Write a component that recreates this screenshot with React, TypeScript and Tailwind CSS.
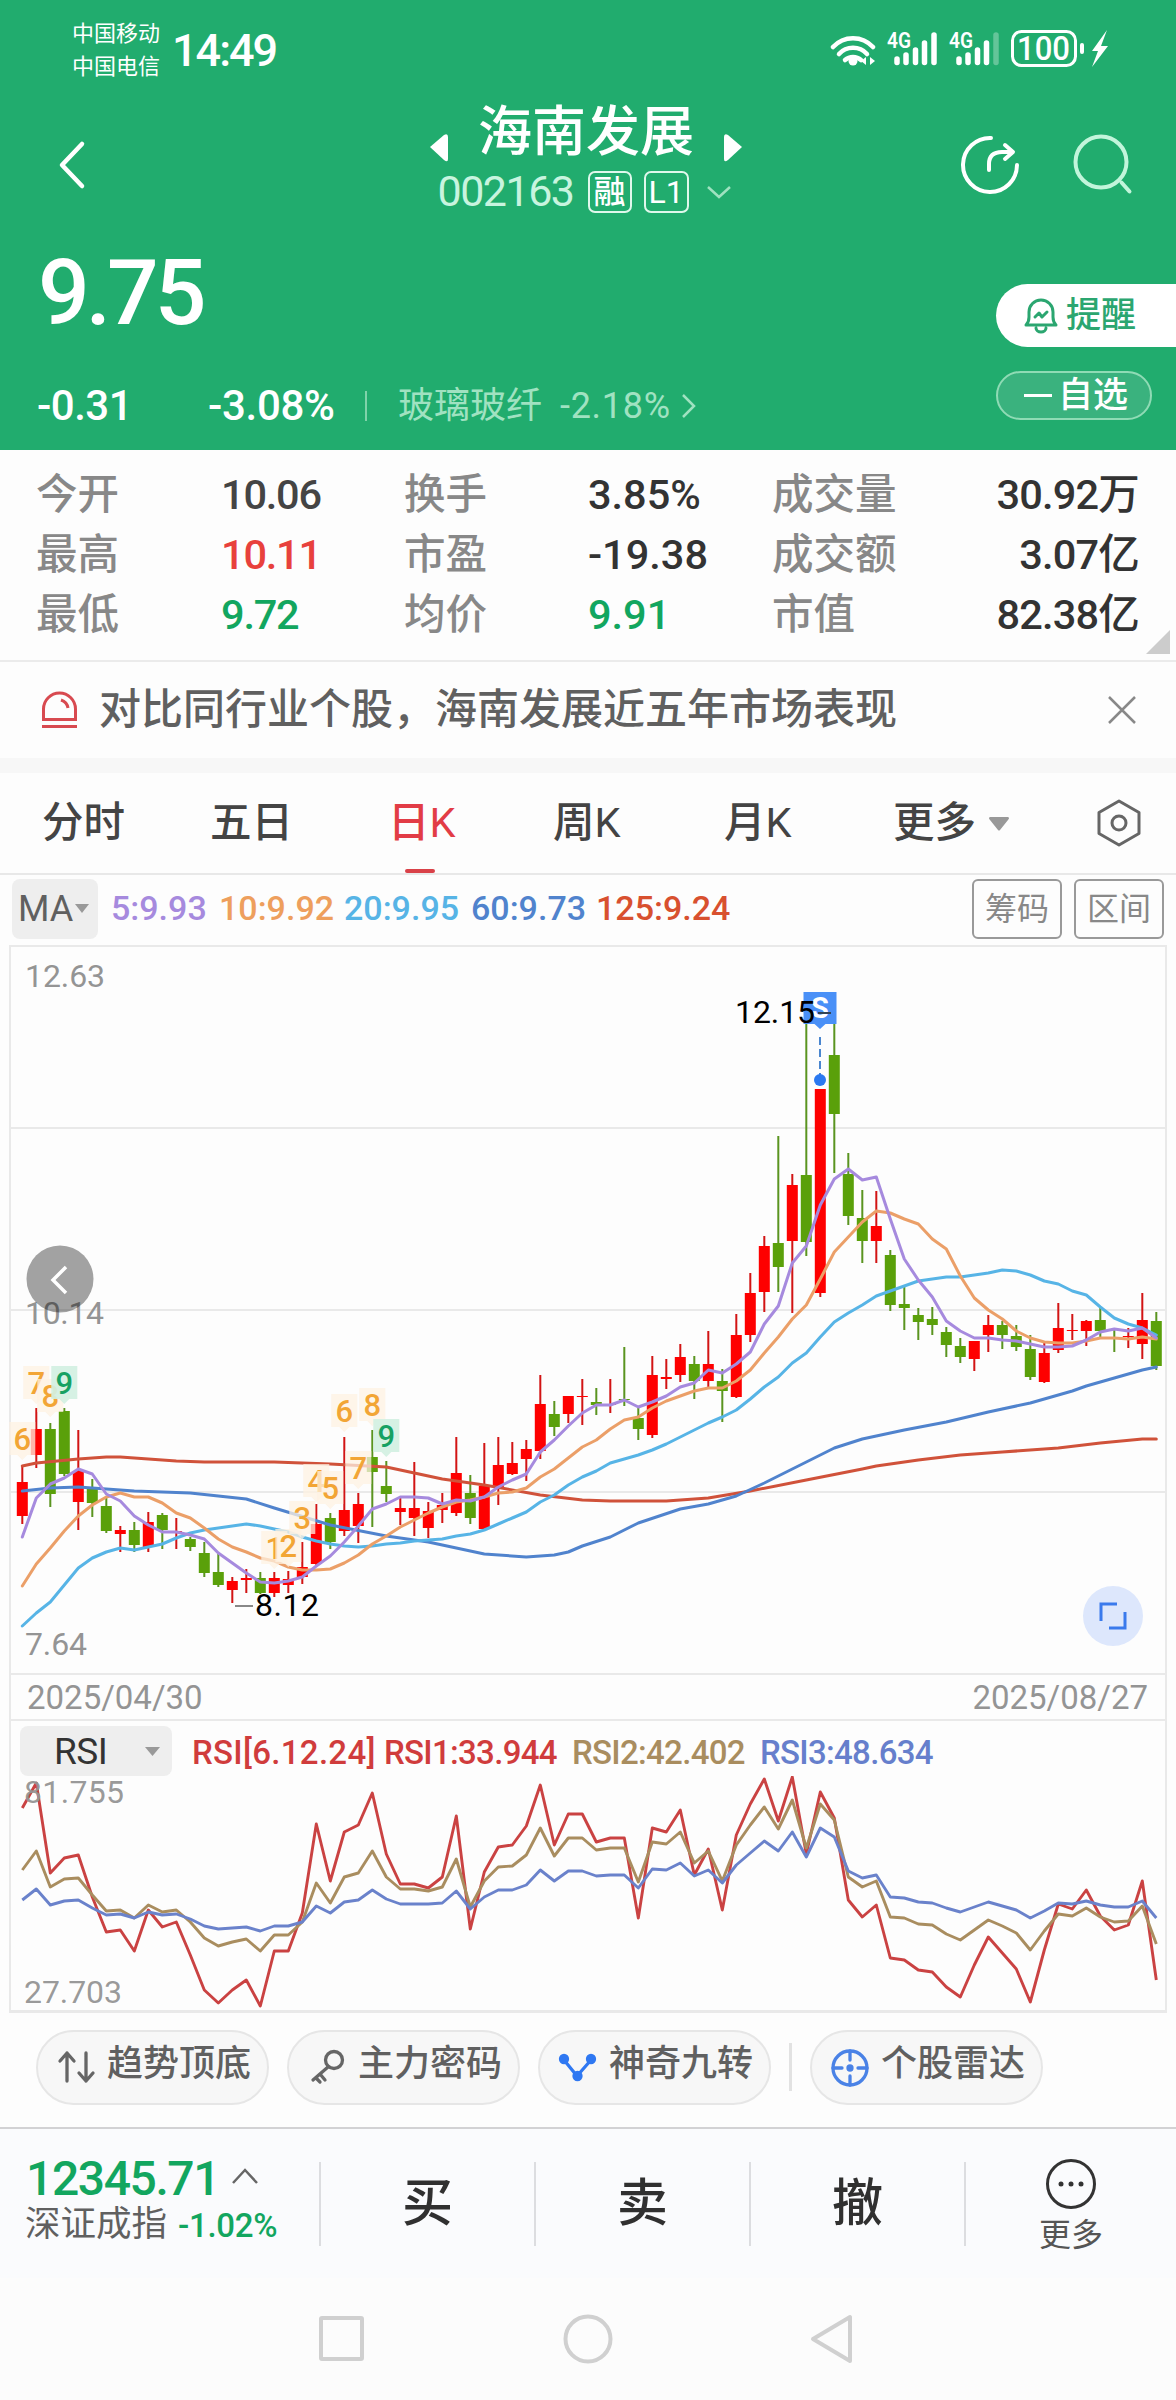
import type { ReactNode } from "react";

type Candle = [up: 0 | 1, high: number, top: number, bottom: number, low: number];

const STEP = 14;
const START = 22.3;
const xAt = (i: number) => START + i * STEP;

// up flag, high, body top, body bottom, low (chart pixels)
const candles: Candle[] = [
  [1, 522, 537, 571, 579], [1, 463, 484, 510, 523], [0, 478, 484, 549, 562], [0, 463, 466, 529, 531],
  [1, 485, 526, 557, 585], [0, 534, 543, 558, 572], [0, 553, 561, 586, 588], [1, 581, 585, 589, 607],
  [0, 577, 585, 600, 607], [1, 567, 577, 602, 607], [0, 568, 570, 585, 604], [1, 573, 586, 588, 604],
  [0, 592, 594, 602, 606], [0, 597, 608, 628, 632], [0, 609, 627, 640, 642], [1, 632, 636, 645, 658],
  [1, 624, 633, 635, 648], [0, 627, 633, 648, 649], [1, 627, 633, 648, 652], [1, 626, 634, 640, 648],
  [1, 597, 622, 632, 639], [1, 559, 579, 619, 620], [0, 568, 573, 597, 604], [1, 492, 565, 586, 591],
  [1, 548, 559, 581, 598], [0, 485, 512, 527, 582], [0, 516, 541, 549, 557], [1, 552, 563, 567, 580],
  [1, 517, 563, 573, 591], [1, 557, 566, 583, 593], [1, 548, 560, 565, 578], [1, 492, 528, 568, 571],
  [0, 530, 548, 573, 579], [1, 498, 541, 584, 585], [1, 492, 520, 542, 560], [1, 497, 518, 529, 530],
  [1, 495, 504, 514, 536], [1, 430, 459, 506, 514], [0, 456, 469, 482, 491], [1, 451, 451, 469, 478],
  [1, 434, 451, 452, 480], [0, 443, 457, 460, 470], [1, 434, 459, 460, 468], [0, 402, 454, 455, 461],
  [0, 463, 473, 484, 495], [1, 411, 430, 490, 493], [1, 414, 432, 434, 444], [1, 399, 412, 430, 437],
  [0, 411, 419, 436, 454], [1, 386, 419, 436, 442], [0, 424, 436, 446, 477], [1, 369, 390, 452, 453],
  [1, 328, 348, 390, 397], [1, 291, 301, 347, 367], [0, 191, 298, 322, 347], [1, 229, 240, 296, 368],
  [0, 78, 230, 297, 311], [1, 144, 144, 348, 352], [0, 70, 110, 169, 228], [0, 208, 229, 271, 280],
  [0, 245, 273, 296, 318], [1, 246, 281, 296, 318], [0, 305, 310, 360, 366], [0, 341, 359, 363, 385],
  [0, 363, 370, 377, 395], [0, 362, 374, 380, 390], [0, 382, 387, 400, 412], [0, 393, 401, 412, 418],
  [1, 396, 396, 414, 426], [1, 370, 380, 390, 407], [0, 376, 380, 390, 404], [0, 380, 391, 402, 406],
  [0, 390, 404, 432, 435], [1, 396, 408, 437, 438], [1, 358, 383, 405, 408], [1, 369, 385, 386, 395],
  [1, 375, 376, 386, 401], [0, 363, 375, 386, 393], [0, 384, 392, 393, 407], [1, 383, 391, 392, 403],
  [1, 348, 375, 399, 414], [0, 367, 376, 421, 425],
];

const ma5 = [
  592, 553, 539, 533, 524, 529, 549, 556, 571, 580, 587, 587, 590, 594, 608, 618, 628, 637, 638, 636, 632,
  621, 611, 597, 581, 564, 559, 552, 552, 553, 559, 555, 556, 552, 542, 535, 529, 507, 495, 481, 468, 460,
  460, 455, 462, 457, 451, 442, 438, 425, 428, 419, 407, 379, 361, 318, 301, 260, 234, 224, 235, 232, 274,
  314, 335, 352, 376, 386, 393, 393, 395, 396, 399, 402, 402, 401, 395, 387, 384, 386, 383, 393,
];
const ma10 = [
  641, 619, 603, 586, 571, 560, 552, 548, 552, 552, 558, 568, 573, 583, 594, 602, 607, 613, 616, 622, 625,
  625, 624, 618, 610, 599, 591, 582, 575, 568, 562, 557, 555, 552, 548, 547, 543, 532, 524, 513, 502, 495,
  484, 475, 472, 463, 456, 451, 446, 443, 443, 436, 425, 408, 392, 374, 360, 334, 307, 292, 277, 266, 268,
  274, 279, 294, 304, 331, 353, 365, 374, 386, 393, 397, 398, 398, 396, 393, 393, 394, 392, 394,
];
const ma20 = [
  681, 668, 657, 640, 623, 613, 607, 603, 605, 602, 599, 593, 588, 585, 583, 581, 579, 581, 584, 587, 592,
  596, 599, 601, 602, 601, 599, 598, 596, 595, 594, 591, 589, 585, 579, 573, 567, 557, 550, 540, 532, 526,
  518, 514, 510, 505, 499, 492, 485, 478, 472, 465, 454, 442, 432, 418, 408, 392, 377, 368, 360, 351, 346,
  341, 336, 334, 332, 332, 330, 328, 325, 326, 330, 336, 339, 346, 350, 362, 373, 379, 383, 390,
];

// slow averages only need a point every few sessions
const ma60: [number, number][] = [
  [0, 546], [2, 543], [4, 542], [8, 546], [12, 548], [16, 554], [18, 563], [22, 580], [26, 591], [29, 597],
  [33, 609], [36, 612], [38, 610], [39, 607], [40, 601], [42, 592], [44, 578], [47, 564], [49, 559],
  [51, 551], [53, 538], [55, 524], [56, 517], [58, 503], [60, 494], [63, 485], [66, 477], [69, 467],
  [72, 458], [75, 446], [76, 441], [78, 433], [80, 425], [81, 422],
];
const ma125: [number, number][] = [
  [0, 521], [1, 518], [4, 514], [6, 512], [7, 512], [11, 516], [13, 517], [18, 517], [22, 519], [26, 522],
  [27, 525], [30, 534], [33, 540], [37, 550], [40, 555], [42, 556], [46, 556], [49, 553], [52, 546],
  [56, 535], [60, 524], [61, 521], [64, 515], [67, 510], [70, 507], [74, 503], [77, 498], [80, 494], [81, 494],
];

const rsi1 = [
  87, 62, 152, 137, 134, 176, 211, 209, 230, 189, 206, 201, 234, 269, 282, 269, 259, 285, 230, 230, 192,
  103, 160, 111, 104, 72, 133, 163, 163, 167, 156, 95, 208, 151, 126, 124, 105, 64, 124, 93, 93, 121,
  117, 117, 197, 107, 111, 89, 154, 128, 189, 114, 83, 58, 100, 56, 133, 71, 97, 179, 196, 184, 237,
  239, 249, 251, 266, 276, 244, 216, 232, 248, 281, 229, 183, 188, 169, 195, 209, 204, 160, 259,
];
const rsi2 = [
  149, 130, 166, 158, 157, 174, 190, 189, 197, 184, 191, 189, 201, 217, 225, 221, 218, 230, 214, 214, 201,
  162, 182, 156, 152, 130, 156, 168, 168, 170, 166, 138, 186, 160, 146, 145, 134, 107, 135, 117, 117, 129,
  127, 127, 161, 121, 123, 111, 142, 130, 160, 124, 104, 86, 108, 79, 127, 83, 99, 156, 166, 160, 196,
  197, 203, 204, 213, 219, 209, 199, 205, 212, 229, 210, 193, 195, 187, 196, 201, 200, 185, 223,
];
const rsi3 = [
  179, 168, 184, 180, 179, 187, 194, 193, 197, 191, 194, 193, 198, 205, 208, 207, 206, 210, 205, 205, 201,
  185, 192, 181, 179, 169, 178, 183, 183, 183, 182, 170, 188, 176, 169, 169, 164, 149, 160, 150, 150, 155,
  154, 154, 167, 148, 149, 142, 155, 149, 162, 144, 132, 120, 130, 111, 136, 107, 116, 150, 157, 154, 176,
  177, 181, 182, 187, 191, 186, 181, 185, 189, 197, 190, 182, 183, 180, 184, 186, 186, 180, 197,
];

// session index, top of tag, count
const turns: [number, number, number][] = [
  [0, 477, 6], [1, 421, 7], [2, 434, 8], [3, 421, 9], [18, 586, 1], [19, 584, 2], [20, 556, 3],
  [21, 519, 4], [22, 526, 5], [23, 449, 6], [24, 506, 7], [25, 443, 8], [26, 474, 9],
];

const line = (ys: number[]) => ys.map((y, i) => `${xAt(i)},${y}`).join(" ");
const sparse = (pts: [number, number][]) => pts.map(([i, y]) => `${xAt(i)},${y}`).join(" ");

function StatusBar() {
  return (
    <div className="flex h-[100px] items-center pl-[72px] pr-[68px]">
      <div className="text-[22px] font-normal leading-[33px]">
        <div>中国移动</div>
        <div>中国电信</div>
      </div>
      <span className="ml-[12px] text-[45px] leading-none tracking-[-2px]">14:49</span>
      <svg className="ml-auto" width="278" height="46" viewBox="830 28 278 46" fill="none" stroke="#fff">
        <g strokeWidth="4.5" strokeLinecap="round">
          <path d="M833 48a27 27 0 0 1 40 0" />
          <path d="M839 55a19 19 0 0 1 28 0" />
          <path d="M845 61a12 12 0 0 1 16 0" />
        </g>
        <circle cx="853" cy="62" r="4.5" fill="#fff" stroke="none" />
        <path d="M866 58v8l-5-4zM870 58v8l5-4z" fill="#fff" stroke="none" />
        {[0, 62].map((dx) => (
          <g key={dx} transform={`translate(${dx} 0)`}>
            <text x="887" y="49" fontSize="22" fontWeight="600" fill="#fff" stroke="none" textLength="24" lengthAdjust="spacingAndGlyphs">
              4G
            </text>
            <g strokeWidth="5.5" strokeLinecap="round">
              <path d="M897 60v3.5M906 56v7.5M915.5 51v12.5M924.5 44v19.5" />
              <path d="M934 36v27.5" opacity={dx ? 0.3 : 1} />
            </g>
          </g>
        ))}
        <rect x="1012.5" y="32.500" width="63" height="34" rx="9" strokeWidth="3" />
        <text x="1017" y="61" fontSize="33" fill="#fff" stroke="none" textLength="53" lengthAdjust="spacingAndGlyphs">
          100
        </text>
        <path d="M1082 46v7" strokeWidth="4" strokeLinecap="round" />
        <path d="M1107 31l-15 21h6l-6 16 16-21h-7l6-16z" fill="#fff" stroke="none" />
      </svg>
    </div>
  );
}

function TitleBar() {
  return (
    <div className="flex h-[130px] justify-between pl-[56px] pr-[42px]">
      <svg className="mt-[39px]" width="32" height="54" fill="none" stroke="#fff" strokeWidth="4.5" strokeLinecap="round" strokeLinejoin="round">
        <path d="M26 5L6 26l20 21" />
      </svg>
      <div className="ml-[124px] flex flex-col items-center">
        <div className="flex h-[62px] items-center gap-[29px]">
          <svg className="mt-[34px]" width="20" height="30" fill="#fff">
            <path d="M1 14L15 2q4-2 4 2v22q0 4-4 1z" />
          </svg>
          <span className="mt-[4px] text-[54px] leading-none">海南发展</span>
          <svg className="mt-[34px]" width="20" height="30" fill="#fff">
            <path d="M19 14L5 2Q1 0 1 4v22q0 4 4 1z" />
          </svg>
        </div>
        <div className="-ml-[3px] mt-[8px] flex h-[43px] items-center">
          <span className="text-[43px] font-normal leading-none tracking-[-1.500px] text-[#c8f4df]">002163</span>
          <span className="ml-[14px] flex h-[42px] w-[44px] items-center justify-center rounded-[7px] border-2 border-[#dff8ec] text-[32px] leading-none">
            融
          </span>
          <span className="ml-[12px] flex h-[42px] w-[45px] items-center justify-center rounded-[7px] border-2 border-[#dff8ec] text-[32px] font-normal leading-none">
            L1
          </span>
          <svg className="ml-[17px]" width="26" height="16" fill="none" stroke="#9fe2c0" strokeWidth="2.500">
            <path d="M2 3l11 10L24 3" />
          </svg>
        </div>
      </div>
      <svg className="mt-[32px]" width="174" height="64" viewBox="960 132 174 64" fill="none" stroke="#fff" strokeWidth="4" strokeLinecap="round" strokeLinejoin="round">
        <path d="M991 138A27 27 0 1 0 1017 165" />
        <path d="M989 170v-6q0-12 13-12h10M1005 145l8 7-8 7" />
        <circle cx="1101" cy="162" r="25.500" stroke="#c2f5db" />
        <path d="M1121.500 182.500l8 9" stroke="#c2f5db" />
      </svg>
    </div>
  );
}

function PriceBlock() {
  return (
    <div className="flex h-[220px] justify-between">
      <div>
        <div className="ml-[38px] mt-[17px] text-[91px] leading-[92px] tracking-[-4px]">9.75</div>
        <div className="mt-[45px] flex h-[44px] items-center text-[42px] leading-none">
          <span className="w-[171px] pl-[37px] tracking-[-0.500px]">-0.31</span>
          <span className="w-[158px] pl-[37px] tracking-[-0.300px]">-3.08%</span>
          <span className="ml-[36px] h-[30px] w-[2px] bg-[#7fd3aa]" />
          <span className="ml-[31px] text-[36px] font-normal text-[#a0e2c1]">玻璃玻纤</span>
          <span className="ml-[18px] text-[36px] font-normal tracking-[0.700px] text-[#a0e2c1]">-2.18%</span>
          <svg className="ml-[9px]" width="18" height="26" fill="none" stroke="#a0e2c1" strokeWidth="2.500">
            <path d="M3 2l11 11L3 24" />
          </svg>
        </div>
      </div>
      <div className="flex w-[180px] flex-col">
        <div className="mt-[54px] flex h-[63px] items-center rounded-l-full bg-white pl-[27px] text-[35px] leading-none text-[#2ba670]">
          <svg className="mr-[7px]" width="36" height="38" fill="none" stroke="#2ba670" strokeWidth="3" strokeLinecap="round" strokeLinejoin="round">
            <path d="M3 28h30q-3-3-3-8v-5a12 12 0 0 0-24 0v5q0 5-3 8M13 31a5 4 0 0 0 10 0" />
            <path d="M12 20l4-4 3 4 5-5" />
          </svg>
          提醒
        </div>
        <div className="mt-[24px] flex h-[49px] w-[156px] items-center rounded-full border-2 border-[#8fdbb5] bg-[#3ab27e] pl-[26px] text-[35px] leading-none">
          <span className="mr-[6px] h-[3px] w-[28px] bg-white" />
          自选
        </div>
      </div>
    </div>
  );
}

const stats = [
  ["今开", "10.06", "text-[#444]", "换手", "3.85%", "text-[#333]", "成交量", "30.92万"],
  ["最高", "10.11", "text-[#e8413c]", "市盈", "-19.38", "text-[#333]", "成交额", "3.07亿"],
  ["最低", "9.72", "text-[#12a65f]", "均价", "9.91", "text-[#12a65f]", "市值", "82.38亿"],
];

function Stats() {
  return (
    <div className="relative h-[212px] border-b-2 border-[#ebebeb] pt-[15px] text-[41.500px] leading-none">
      {stats.map(([a, av, ac, b, bv, bc, c, cv]) => (
        <div key={a} className="flex h-[60px] items-center pl-[36px] pr-[37px]">
          <span className="w-[185px] text-[#888]">{a}</span>
          <span className={`w-[183px] tracking-[-1.200px] ${ac}`}>{av}</span>
          <span className="w-[184px] text-[#888]">{b}</span>
          <span className={`w-[184px] ${bc}`}>{bv}</span>
          <span className="text-[#888]">{c}</span>
          <span className="ml-auto tracking-[-0.800px] text-[#333]">{cv}</span>
        </div>
      ))}
      <svg className="absolute bottom-[6px] right-[6px]" width="24" height="24" fill="#ccc">
        <path d="M24 0v24H0z" />
      </svg>
    </div>
  );
}

function Notice() {
  return (
    <div className="flex h-[96px] items-center pl-[41px] pr-[39px]">
      <svg width="38" height="38" fill="none" stroke="#d84a50" strokeWidth="3">
        <path d="M2.500 28.500V18a16 16 0 0 1 32 0v10.500zM1 35.500h35M20 9q6 2 7 8" />
      </svg>
      <span className="ml-[20px] text-[42px] leading-none text-[#606060]">对比同行业个股，海南发展近五年市场表现</span>
      <svg className="ml-auto" width="30" height="30" stroke="#888" strokeWidth="2.500">
        <path d="M2 2l26 26M28 2L2 28" />
      </svg>
    </div>
  );
}

function Tabs() {
  const items = [
    ["分时", "", "w-[168px]"],
    ["五日", "", "w-[178px]"],
    ["日", "K", "w-[165px]"],
    ["周", "K", "w-[171px]"],
    ["月", "K", "w-[169px]"],
  ];
  return (
    <div className="flex h-[102px] items-center border-b-2 border-[#e8e8e8] pl-[42px] pr-[34px] text-[41.500px] leading-none text-[#444]">
      {items.map(([name, k, w]) =>
        name === "日" ? (
          <span key={name} className={`relative flex h-full items-center text-[#e23c46] ${w}`}>
            {name}
            <span className="font-normal">{k}</span>
            <span className="absolute bottom-0 left-[17px] h-[4px] w-[30px] rounded-sm bg-[#d94148]" />
          </span>
        ) : (
          <span key={name} className={w}>
            {name}
            <span className="font-normal">{k}</span>
          </span>
        ),
      )}
      <span>更多</span>
      <svg className="ml-[12px] mt-[2px]" width="22" height="14" fill="#999">
        <path d="M2 0h18q2 1 0 3L12 13q-1 1-2 0L2 3Q0 1 2 0z" />
      </svg>
      <svg className="ml-auto" width="46" height="50" fill="none" stroke="#666" strokeWidth="3" strokeLinejoin="round">
        <path d="M23 3l20 11.500v21L23 47 3 35.500v-21z" />
        <circle cx="23" cy="25" r="7" />
      </svg>
    </div>
  );
}

function MaLegend() {
  return (
    <div className="flex h-[70px] items-start pl-[12px] pr-[12px] pt-[4px] text-[34px] leading-none">
      <div className="flex h-[60px] w-[86px] items-center rounded-[8px] bg-[#eee] pl-[6px] text-[36px] font-normal text-[#606060]">
        MA
        <svg className="ml-[2px]" width="14" height="10" fill="#999">
          <path d="M0 0h14L7 9z" />
        </svg>
      </div>
      <div className="ml-[13px] mt-[12px] flex">
        <span className="w-[108px] text-[#a68ade]">5:9.93</span>
        <span className="w-[125px] text-[#ee9f5d]">10:9.92</span>
        <span className="w-[127px] text-[#57b4e6]">20:9.95</span>
        <span className="w-[125px] text-[#5083cd]">60:9.73</span>
        <span className="text-[#d8502f]">125:9.24</span>
      </div>
      <span className="ml-auto flex h-[60px] w-[90px] items-center justify-center rounded-[6px] border-2 border-[#999] text-[32px] font-normal text-[#888]">筹码</span>
      <span className="ml-[12px] flex h-[60px] w-[90px] items-center justify-center rounded-[6px] border-2 border-[#999] text-[32px] font-normal text-[#888]">区间</span>
    </div>
  );
}

function KChart() {
  return (
    <svg className="block font-normal" width="1176" height="728" viewBox="0 0 1176 728" fill="none">
      <g stroke="#e9e9e9" strokeWidth="2">
        <path d="M10 728V1H1166V728" />
        <path d="M10 183H1166M10 365H1166M10 547H1166" />
      </g>
      <g fill="#949494" fontSize="32">
        <text x="25" y="42" textLength="80">12.63</text>
        <text x="25" y="379" textLength="79">10.14</text>
        <text x="25" y="710" textLength="62">7.64</text>
      </g>
      {candles.map(([up, high, top, bottom, low], i) => (
        <g key={i} fill={up ? "#fe0000" : "#5aa00a"}>
          <rect x={xAt(i) - 1} y={high} width="2" height={low - high} fill={up ? "#d21414" : "#5a9420"} />
          <rect x={xAt(i) - 5.5} y={top} width="11" height={Math.max(bottom - top, 1)} />
        </g>
      ))}
      <g strokeWidth="3" strokeLinejoin="round" strokeLinecap="round">
        <polyline points={sparse(ma125)} stroke="#d0523a" />
        <polyline points={sparse(ma60)} stroke="#5083cd" />
        <polyline points={line(ma20)} stroke="#57b4e6" />
        <polyline points={line(ma10)} stroke="#eb9f68" />
        <polyline points={line(ma5)} stroke="#a68ade" />
      </g>
      {turns.map(([i, y, n]) => (
        <g key={i} transform={`translate(${xAt(i)} ${y})`}>
          <path
            d="M-13 0H13V33H5L0 38L-5 33H-13Z"
            fill={n === 9 ? "#d3f0e2" : "#fef1e2"}
            fillOpacity={n === 9 ? 0.92 : 0.75}
          />
          <text y="28" fontSize="31" fontWeight="500" textAnchor="middle" fill={n === 9 ? "#16a163" : "#f2a535"}>
            {n}
          </text>
        </g>
      ))}
      <path d="M235 661h18" stroke="#888" strokeWidth="2" />
      <text x="255" y="671" fontSize="32" fill="#000" textLength="64">8.12</text>

      <path d="M803.500 47h33v32h-11l-5.500 5-5.500-5h-11z" fill="#4a90f7" />
      <text x="820" y="73" fontSize="29" fontWeight="700" fill="#fff" textAnchor="middle">S</text>
      <path d="M820 92v40" stroke="#4a86cf" strokeWidth="2" strokeDasharray="8 4" />
      <circle cx="820" cy="135" r="6" fill="#2a78f0" />
      <path d="M818 68h13" stroke="#345" strokeWidth="2" />
      <text x="735" y="78" fontSize="32" fill="#000" textLength="80">12.15</text>

      <circle cx="60" cy="334" r="33.500" fill="#000" fillOpacity="0.36" />
      <path d="M66 322L53 335l13 13" stroke="#fff" strokeWidth="3.500" />
      <circle cx="1113" cy="671" r="30" fill="#dde7fc" />
      <path d="M1101 676V659H1117M1125 667V683H1109" stroke="#3a7aec" strokeWidth="3" />
    </svg>
  );
}

function RsiPanel() {
  return (
    <div className="mx-[9px] h-[292px] border-x-2 border-b-[3px] border-[#e9e9e9] pt-[5px]">
      <div className="flex h-[50px] items-center pl-[9px] text-[33px] leading-none">
        <div className="flex h-[50px] w-[152px] items-center rounded-[8px] bg-[#eee] pl-[34px] text-[37px] font-normal tracking-[-0.500px] text-[#333]">
          RSI
          <svg className="ml-auto mr-[12px]" width="15" height="9" fill="#999">
            <path d="M0 0h15L7.500 9z" />
          </svg>
        </div>
        <div className="ml-[20px] mt-[3px] flex tracking-[-0.700px]">
          <span className="w-[192px] tracking-[0.300px] text-[#d03c3c]">RSI[6.12.24]</span>
          <span className="w-[188px] text-[#d03c3c]">RSI1:33.944</span>
          <span className="w-[188px] text-[#a98d5f]">RSI2:42.402</span>
          <span className="text-[#667fcc]">RSI3:48.634</span>
        </div>
      </div>
      <svg className="-ml-[11px] block font-normal" width="1176" height="232" viewBox="0 55 1176 232" fill="none">
        <g strokeWidth="2.900" strokeLinejoin="round">
          <polyline points={line(rsi1)} stroke="#ca4242" />
          <polyline points={line(rsi2)} stroke="#a98d5f" />
          <polyline points={line(rsi3)} stroke="#6a82cb" />
        </g>
        <g fill="#949494" fontSize="32" fillOpacity="0.95">
          <text x="24" y="82" textLength="100">81.755</text>
          <text x="24" y="282" textLength="98">27.703</text>
        </g>
      </svg>
    </div>
  );
}

function Chip({ icon, label }: { icon: ReactNode; label: string }) {
  return (
    <div className="flex h-[75px] w-[233px] items-center rounded-full border-2 border-[#e6e6e6] bg-[#f7f7f7] pl-[18px] text-[36px] leading-none text-[#606060]">
      <svg width="42" height="42" fill="none" strokeWidth="3.300" strokeLinecap="round" strokeLinejoin="round">
        {icon}
      </svg>
      <span className="-mt-[8px] ml-[9px]">{label}</span>
    </div>
  );
}

function Chips() {
  return (
    <div className="flex h-[114px] gap-[18px] pl-[36px] pt-[17px]">
      <Chip
        label="趋势顶底"
        icon={<path d="M11 34V6M4 14l7-8 7 8M30 6v28M37 26l-7 8-7-8" stroke="#666" />}
      />
      <Chip
        label="主力密码"
        icon={
          <g stroke="#666">
            <circle cx="27" cy="13" r="8.500" />
            <path d="M21 20L6 33M13 27l5 6M9 31l4 4" />
          </g>
        }
      />
      <Chip
        label="神奇九转"
        icon={
          <g stroke="#2f78f2" fill="#2f78f2">
            <path d="M6 13L19 29L33 13" fill="none" />
            <circle cx="6" cy="12" r="3.500" />
            <circle cx="19.500" cy="29" r="3.500" />
            <circle cx="33" cy="12" r="3.500" />
          </g>
        }
      />
      <div className="mt-[13px] h-[48px] w-[3px] bg-[#e2e2e2]" />
      <Chip
        label="个股雷达"
        icon={
          <g stroke="#4a82e6">
            <circle cx="20" cy="21" r="17" />
            <path d="M20 4v9M20 29v9M3 21h9M28 21h9" />
            <circle cx="20" cy="21" r="2" fill="#4a82e6" />
          </g>
        }
      />
    </div>
  );
}

function TradeBar() {
  return (
    <div className="flex h-[151px] items-start border-t-2 border-[#d2d2d4] bg-[#fafbfd] pt-[33px] leading-none">
      <div className="w-[319px] pl-[26px]">
        <div className="-mt-[3px] flex h-[40px] items-center text-[48px] text-[#12a65f]">
          <span className="tracking-[-1.400px]">12345.71</span>
          <svg className="-mt-[4px] ml-[12px]" width="28" height="18" fill="none" stroke="#666" strokeWidth="2.500">
            <path d="M2 15L14 2l12 13" />
          </svg>
        </div>
        <div className="-ml-[1px] mt-[6px] flex h-[40px] items-center text-[35.500px] font-normal text-[#606060]">
          深证成指
          <span className="ml-[11px] text-[33px] font-medium tracking-[-0.300px] text-[#12a65f]">-1.02%</span>
        </div>
      </div>
      {["买", "卖", "撤"].map((t) => (
        <div key={t} className="flex h-[84px] w-[215px] items-center justify-center border-l-2 border-[#dcdde0] text-[51px] text-[#303030]">
          <span className="-mt-[2px]">{t}</span>
        </div>
      ))}
      <div className="flex h-[84px] flex-1 flex-col items-center border-l-2 border-[#dcdde0] text-[32px] font-normal text-[#555]">
        <svg className="-mt-[4px] shrink-0" width="52" height="52" fill="none" stroke="#333" strokeWidth="3">
          <circle cx="26" cy="26" r="23.500" />
          <g fill="#333" stroke="none">
            <circle cx="16" cy="26" r="2.500" />
            <circle cx="26" cy="26" r="2.500" />
            <circle cx="36" cy="26" r="2.500" />
          </g>
        </svg>
        <span className="mt-[9px]">更多</span>
      </div>
    </div>
  );
}

function SystemNav() {
  return (
    <div className="flex h-[122px] items-center justify-center bg-[#fcfcfc]">
      <svg width="540" height="56" fill="none" stroke="#d0d0d0" strokeWidth="4" strokeLinejoin="round">
        <rect x="3" y="7" width="41" height="41" rx="1" />
        <circle cx="270" cy="28" r="22.500" />
        <path d="M532 6v44L495 28z" />
      </svg>
    </div>
  );
}

export default function App() {
  return (
    <div className="h-[2400px] w-[1176px] overflow-hidden bg-[#fdfdfd] font-[Roboto,'Noto_Sans_CJK_SC',sans-serif] font-medium">
      <header className="h-[450px] bg-[#21ac6e] text-white">
        <StatusBar />
        <TitleBar />
        <PriceBlock />
      </header>
      <Stats />
      <Notice />
      <div className="h-[15px] bg-[#f7f7f7]" />
      <Tabs />
      <MaLegend />
      <KChart />
      <div className="mx-[9px] flex h-[48px] items-center justify-between border-2 border-[#e9e9e9] pl-[16px] pr-[17px] text-[33px] font-normal leading-none text-[#949494]">
        <span>2025/04/30</span>
        <span>2025/08/27</span>
      </div>
      <RsiPanel />
      <Chips />
      <TradeBar />
      <SystemNav />
    </div>
  );
}
